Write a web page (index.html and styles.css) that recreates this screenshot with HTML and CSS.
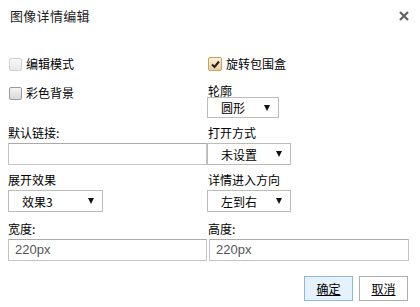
FILE: index.html
```html
<!DOCTYPE html>
<html lang="zh-CN">
<head>
    <meta charset="UTF-8">
    <title>图像详情编辑</title>
    <link rel="stylesheet" href="styles.css">
</head>
<body>
    <div class="dialog">
        <div class="head">
            <span class="title">图像详情编辑</span>
            <svg class="close" width="10" height="10" viewBox="0 0 10 10">
                <path d="M1 1L9 9M9 1L1 9" stroke="#666" stroke-width="2.4"/>
            </svg>
        </div>

        <div class="grid">
            <div class="cell">
                <label class="check"><span class="box disabled"></span>编辑模式</label>
                <label class="check second"><span class="box"></span>彩色背景</label>
            </div>
            <div class="cell">
                <label class="check"><span class="box checked">
                    <svg width="11" height="11" viewBox="0 0 11 11"><path d="M2 5.5L4.5 8L9 2.5" stroke="#222" stroke-width="2" fill="none"/></svg>
                </span>旋转包围盒</label>
                <div class="label outline">轮廓</div>
                <div class="select small"><span>圆形</span><i class="arrow"></i></div>
            </div>

            <div class="cell row">
                <div class="label">默认链接:</div>
                <div class="input"></div>
            </div>
            <div class="cell row">
                <div class="label">打开方式</div>
                <div class="select"><span>未设置</span><i class="arrow"></i></div>
            </div>

            <div class="cell row">
                <div class="label">展开效果</div>
                <div class="select wide"><span>效果3</span><i class="arrow"></i></div>
            </div>
            <div class="cell row">
                <div class="label">详情进入方向</div>
                <div class="select"><span>左到右</span><i class="arrow"></i></div>
            </div>

            <div class="cell row last">
                <div class="label">宽度:</div>
                <div class="input">220px</div>
            </div>
            <div class="cell row last">
                <div class="label">高度:</div>
                <div class="input">220px</div>
            </div>
        </div>

        <div class="buttons">
            <button class="btn ok">确定</button>
            <button class="btn">取消</button>
        </div>
    </div>
</body>
</html>
```

FILE: styles.css
```css
body {
    margin: 0;
    background: #fff;
    font-family: "Noto Sans CJK SC", "Liberation Sans", sans-serif;
    font-size: 12px;
    color: #000;
}
.dialog {
    width: 420px;
    height: 307px;
}
.head {
    display: flex;
    justify-content: space-between;
    align-items: center;
    padding: 3px 11px 0 10px;
    height: 24px;
}
.title {
    font-size: 13px;
    color: #222;
    letter-spacing: 0.3px;
}
.close {
    margin-top: 2px;
}
.grid {
    display: grid;
    grid-template-columns: 200px 200px;
    padding: 29px 0 0 8px;
}
.cell {
    display: flex;
    flex-direction: column;
    align-items: flex-start;
}
.check {
    display: flex;
    align-items: center;
    height: 16px;
    line-height: 16px;
}
.check.second {
    margin-top: 13px;
}
.box {
    width: 11px;
    height: 11px;
    margin: 0 4px 0 1px;
    border: 1px solid #9a9a9a;
    border-radius: 2px;
    background: linear-gradient(#f4f4f4, #d8d8d8);
    display: flex;
    align-items: center;
    justify-content: center;
}
.box.disabled {
    border-color: #cfcfcf;
    background: linear-gradient(#f8f8f8, #e8e8e8);
}
.box.checked {
    width: 12px;
    height: 12px;
    margin-left: 0;
    border-color: #c9a063;
    background: linear-gradient(#fbf1dc, #e9cf9c);
}
.label {
    line-height: 15px;
    height: 15px;
    margin-bottom: 3px;
}
.label.outline {
    margin-top: 13px;
    line-height: 12px;
    height: 12px;
    margin-bottom: 0;
}
.row {
    margin-top: 7px;
}
.row.last {
    margin-top: 9px;
}
.select {
    box-sizing: border-box;
    width: 84px;
    height: 22px;
    margin-left: -1px;
    border: 1px solid #bcbcbc;
    background: #fff;
    display: flex;
    align-items: center;
    justify-content: space-between;
    padding: 0 8px 0 13px;
}
.select.small {
    width: 72px;
    height: 21px;
}
.select.wide {
    width: 95px;
    margin-left: 0;
}
.arrow {
    width: 0;
    height: 0;
    border-left: 3px solid transparent;
    border-right: 3px solid transparent;
    border-top: 6px solid #111;
}
.input {
    box-sizing: border-box;
    width: 199px;
    height: 22px;
    border: 1px solid #c4c4c4;
    border-top-color: #aaa;
    padding: 0 6px;
    line-height: 20px;
    font-family: "Liberation Sans", sans-serif;
    font-size: 13px;
    color: #555;
}
.cell.last:nth-child(even) .input {
    width: 200px;
    margin-left: 1px;
}
.buttons {
    display: flex;
    justify-content: flex-end;
    gap: 6px;
    padding: 15px 12px 0 0;
}
.btn {
    width: 49px;
    height: 25px;
    border: 1px solid #adadad;
    background: #fff;
    font-family: "Noto Sans CJK SC", sans-serif;
    font-size: 12px;
    text-decoration: underline;
    color: #000;
    padding: 0;
}
.btn.ok {
    background: #e5f1fb;
    border-color: #8fb9d8;
}
```
